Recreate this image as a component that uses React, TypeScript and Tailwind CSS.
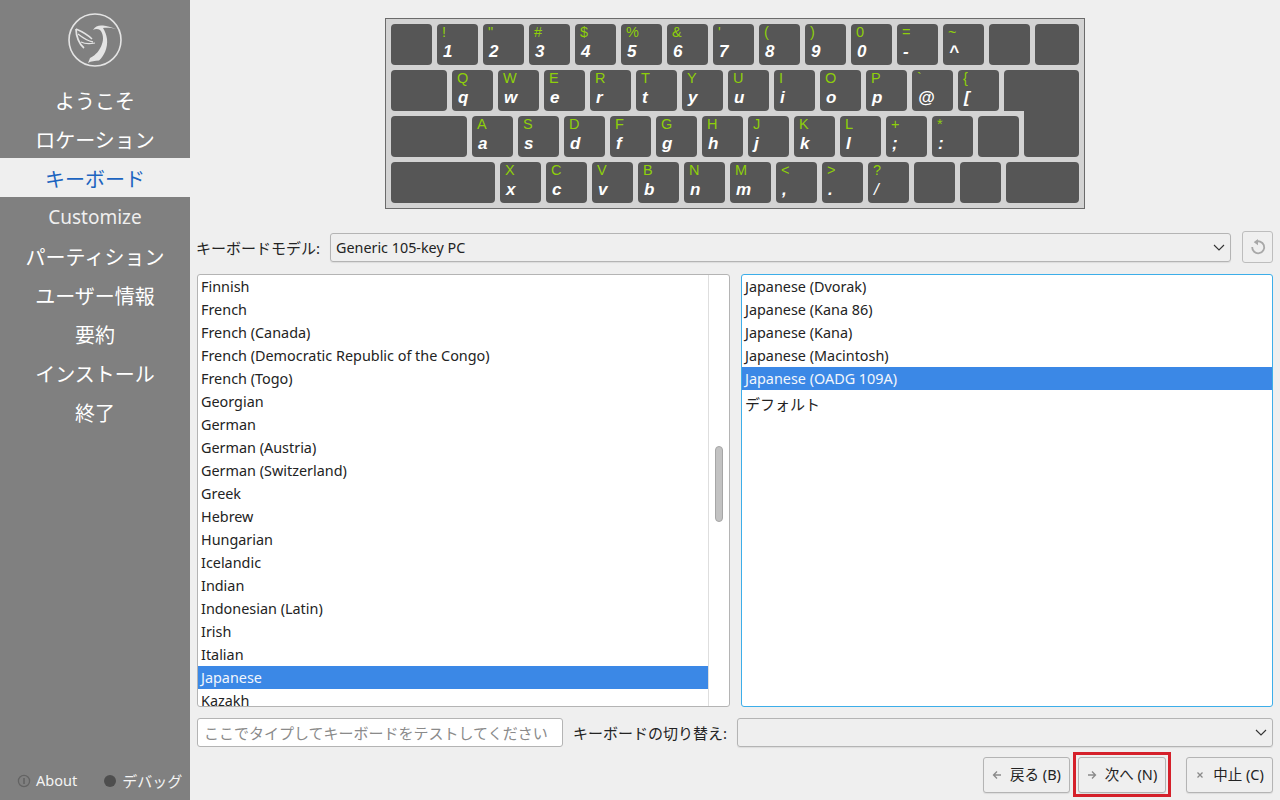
import React from "react";

const SANS = "font-['Noto_Sans','Noto_Sans_CJK_JP',sans-serif]";

type K = { u?: string; l?: string; w?: string; cls?: string };

const Key = ({ u, l, w = "w-[41px]", cls = "" }: K) => (
  <div className={`${w} h-[41px] shrink-0 rounded-[4px] bg-[#565656] relative pl-[5px] ${cls}`}>
    <div className="h-[18px] pt-[1px] text-[14.5px] leading-[15px] text-[#8ecf0a]">{u}</div>
    <div className="text-[17px] leading-[20px] pl-[1px] font-bold italic text-white">{l}</div>
  </div>
);

const r1: [string, string][] = [["!", "1"], ['"', "2"], ["#", "3"], ["$", "4"], ["%", "5"], ["&", "6"], ["'", "7"], ["(", "8"], [")", "9"], ["0", "0"], ["=", "-"], ["~", "^"]];
const r2: [string, string][] = [["Q", "q"], ["W", "w"], ["E", "e"], ["R", "r"], ["T", "t"], ["Y", "y"], ["U", "u"], ["I", "i"], ["O", "o"], ["P", "p"], ["`", "@"], ["{", "["]];
const r3: [string, string][] = [["A", "a"], ["S", "s"], ["D", "d"], ["F", "f"], ["G", "g"], ["H", "h"], ["J", "j"], ["K", "k"], ["L", "l"], ["+", ";"], ["*", ":"]];
const r4: [string, string][] = [["X", "x"], ["C", "c"], ["V", "v"], ["B", "b"], ["N", "n"], ["M", "m"], ["<", ","], [">", "."], ["?", "/"]];

const Keyboard = () => (
  <div className="w-[700px] h-[191px] self-center bg-[#d3d3d3] border border-[#6b6b6b] pt-[5px] pl-[5px] flex flex-col gap-[5px] font-['Liberation_Sans',sans-serif]">
    <div className="flex gap-[5px]">
      <Key />
      {r1.map(([u, l]) => <Key key={l} u={u} l={l} />)}
      <Key />
      <Key w="w-[44px]" />
    </div>
    <div className="flex gap-[5px]">
      <Key w="w-[56px]" />
      {r2.map(([u, l]) => <Key key={l} u={u} l={l} />)}
      <Key w="w-[75px]" cls="rounded-bl-none rounded-br-none" />
    </div>
    <div className="flex gap-[5px]">
      <Key w="w-[76px]" />
      {r3.map(([u, l]) => <Key key={l} u={u} l={l} />)}
      <Key />
      <div className="w-[55px] h-[46px] -mt-[5px] bg-[#565656] rounded-b-[4px]" />
    </div>
    <div className="flex gap-[5px]">
      <Key w="w-[104px]" />
      {r4.map(([u, l]) => <Key key={l} u={u} l={l} cls={l === "/" ? "[&>div:last-child]:font-normal" : ""} />)}
      <Key />
      <Key />
      <Key w="w-[73px]" />
    </div>
  </div>
);

const Logo = () => (
  <svg width="56" height="56" viewBox="0 0 56 56" fill="none" className="text-[#e4e4e4]">
    <circle cx="28" cy="28" r="26" stroke="currentColor" strokeWidth="1.6" />
    <path d="M49 17 C44 15 40 14 36 13.500 C32 13 28 14 26 18 C28 16.500 31 16.500 33 18 C36 21 37 27 35 32 C33 38 29 43 23 46 L21 51 C24 49 28 49 32 48.500 C37 44 41 36 40 27 C39.500 23 38 19 36 16 C40 15.500 45 16 49 17 Z" fill="currentColor" />
    <path d="M9 17 C16 20 22 24 25 27" stroke="currentColor" strokeWidth="1.5" />
    <path d="M9 17 C9 24 12 32 17 36" stroke="currentColor" strokeWidth="1.7" />
    <path d="M11 22 C16 26 21 29 26 30" stroke="currentColor" strokeWidth="1.3" />
    <path d="M14 30 C18 32 23 32 28 31" stroke="currentColor" strokeWidth="1.2" />
  </svg>
);

const nav = ["ようこそ", "ロケーション", "キーボード", "Customize", "パーティション", "ユーザー情報", "要約", "インストール", "終了"];

const Sidebar = () => (
  <aside className="w-[190px] h-[800px] shrink-0 bg-[#808080] flex flex-col">
    <div className="h-[80px] pt-[12px] flex justify-center"><Logo /></div>
    <nav className="flex flex-col">
      {nav.map((n, i) => (
        <div key={n} className={`h-[39px] flex items-center justify-center ${i === 3 ? "pt-[2px] text-[19px] text-[#efefef]" : "pt-[4px] text-[20px]"} ${i === 2 ? "bg-[#efefef] text-[#1c64c0]" : i === 3 ? "" : "text-white"}`}>{n}</div>
      ))}
    </nav>
    <div className="mt-auto h-[38px] flex items-center pl-[17px] text-[14.5px] text-[#f4f4f4]">
      <svg width="14" height="14" viewBox="0 0 14 14" fill="none" className="mr-[5px]">
        <circle cx="7" cy="7" r="5.6" stroke="#636363" strokeWidth="1.3" />
        <path d="M7 4v6" stroke="#636363" strokeWidth="1.6" />
      </svg>
      <span>About</span>
      <span className="w-[12px] h-[12px] rounded-full bg-[#4e4e4e] ml-[27px] mr-[6px]" />
      <span className="text-[15px]">デバッグ</span>
    </div>
  </aside>
);

const left = ["Finnish", "French", "French (Canada)", "French (Democratic Republic of the Congo)", "French (Togo)", "Georgian", "German", "German (Austria)", "German (Switzerland)", "Greek", "Hebrew", "Hungarian", "Icelandic", "Indian", "Indonesian (Latin)", "Irish", "Italian", "Japanese", "Kazakh"];
const right = ["Japanese (Dvorak)", "Japanese (Kana 86)", "Japanese (Kana)", "Japanese (Macintosh)", "Japanese (OADG 109A)"];

const Row = ({ t, sel }: { t: string; sel: boolean }) => (
  <div className={`h-[23px] shrink-0 pl-[3px] text-[14.4px] leading-[23px] whitespace-nowrap ${sel ? "bg-[#3b88e6] text-[#f2f6fc]" : "text-[#232323]"}`}>{t}</div>
);

const Chevron = () => (
  <svg width="12" height="7" viewBox="0 0 12 7" fill="none" className="shrink-0">
    <path d="M1 1l5 5 5-5" stroke="#333" strokeWidth="1.1" />
  </svg>
);

const Btn = ({ icon, label, w }: { icon: React.ReactNode; label: string; w: string }) => (
  <button className={`${w} h-[36px] flex items-center justify-center gap-[8px] rounded-[3px] border border-[#b4b4b4] bg-[#efefef] text-[14.5px] text-[#232323] shadow-[0_1px_1px_rgba(0,0,0,0.08)]`}>
    {icon}
    <span>{label}</span>
  </button>
);

const Arrow = ({ d }: { d: string }) => (
  <svg width="10" height="10" viewBox="0 0 10 10" fill="none"><path d={d} stroke="#8a8a8a" strokeWidth="1.3" /></svg>
);

export default function App() {
  return (
    <div className={`w-[1280px] h-[800px] overflow-hidden flex bg-[#efefef] text-[14.5px] ${SANS}`}>
      <Sidebar />
      <main className="flex-1 flex flex-col px-[7px] pt-[18px] min-w-0">
        <Keyboard />
        <div className="mt-[22px] h-[32px] flex items-center text-[#232323]">
          <span className="-ml-px w-[134px] shrink-0 whitespace-nowrap pt-[2px] text-[15px]">キーボードモデル:</span>
          <div className="w-[901px] h-[29px] flex items-center justify-between pl-[5px] pr-[5px] pt-[1px] border border-[#b4b4b4] rounded-[3px] shadow-[0_1px_1px_rgba(0,0,0,0.08)]">
            <span className="text-[14.35px] pt-[1px]">Generic 105-key PC</span>
            <Chevron />
          </div>
          <div className="ml-[11px] w-[31px] h-[32px] flex items-center justify-center border border-[#bdbdbd] rounded-[3px]">
            <svg width="18" height="18" viewBox="0 0 18 18" fill="none">
              <path d="M6 4.200 A6 6 0 1 1 3.200 9" stroke="#a8a8a8" strokeWidth="1.800" />
              <path d="M9 1 L4.800 4.200 L9 7.200 Z" fill="#a8a8a8" />
            </svg>
          </div>
        </div>
        <div className="mt-[11px] h-[433px] flex gap-[11px]">
          <div className="w-[533px] flex bg-white border border-[#b4b4b4] rounded-[3px] overflow-hidden">
            <div className="flex-1 flex flex-col overflow-hidden min-w-0">
              {left.map((t) => <Row key={t} t={t} sel={t === "Japanese"} />)}
            </div>
            <div className="w-[21px] shrink-0 border-l border-[#dedede] flex justify-center pt-[171px]">
              <div className="w-[8px] h-[76px] rounded-full bg-[#c2c2c2] border border-[#a6a6a6]" />
            </div>
          </div>
          <div className="w-[532px] flex flex-col bg-white border border-[#3daee9] rounded-[3px] overflow-hidden">
            {right.map((t) => <Row key={t} t={t} sel={t.includes("OADG")} />)}
            <div className="h-[30px] pl-[3px] text-[15px] leading-[29px] text-[#232323]">デフォルト</div>
          </div>
        </div>
        <div className="mt-[11px] h-[29px] flex items-center">
          <div className="w-[366px] h-[29px] flex items-center pl-[6px] pt-[1px] bg-white border border-[#b4b4b4] rounded-[3px] text-[15px] text-[#8a8a8a] whitespace-nowrap">ここでタイプしてキーボードをテストしてください</div>
          <span className="ml-[10px] w-[164px] shrink-0 whitespace-nowrap pt-[1px] text-[15px] text-[#232323]">キーボードの切り替え:</span>
          <div className="w-[536px] h-[29px] flex items-center justify-end pr-[5px] border border-[#b4b4b4] rounded-[3px] shadow-[0_1px_1px_rgba(0,0,0,0.08)]">
            <Chevron />
          </div>
        </div>
        <div className="mt-[5px] h-[45px] flex items-center justify-end">
          <Btn w="w-[87px]" label="戻る (B)" icon={<Arrow d="M5 1.500L1.500 5 5 8.500M1.500 5H9" />} />
          <div className="ml-[3px] w-[98px] h-[45px] border-[3px] border-[#d5202a] flex items-center justify-center">
            <Btn w="w-[88px]" label="次へ (N)" icon={<Arrow d="M5 1.500L8.500 5 5 8.500M8.500 5H1" />} />
          </div>
          <div className="ml-[15px]">
            <Btn w="w-[87px]" label="中止 (C)" icon={<Arrow d="M2.500 2.500l5 5M7.500 2.500l-5 5" />} />
          </div>
        </div>
      </main>
    </div>
  );
}
